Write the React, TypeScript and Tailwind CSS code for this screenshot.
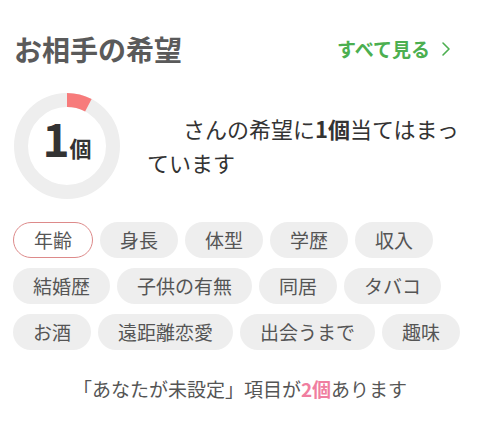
import React from 'react';

const items = [
  ['年齢', '身長', '体型', '学歴', '収入'],
  ['結婚歴', '子供の有無', '同居', 'タバコ'],
  ['お酒', '遠距離恋愛', '出会うまで', '趣味'],
];

const Ring: React.FC<{ matched: number; total: number }> = ({ matched, total }) => {
  const r = 46;
  const c = 2 * Math.PI * r;
  const len = (c * matched) / total;
  return (
    <div className="relative w-[108px] h-[108px] shrink-0">
      <svg width="108" height="108" viewBox="0 0 108 108" className="-rotate-90">
        <circle cx="54" cy="54" r={r} fill="none" stroke="#eeeeee" strokeWidth="14" />
        <circle
          cx="54"
          cy="54"
          r={r}
          fill="none"
          stroke="#f77b7b"
          strokeWidth="14"
          strokeDasharray={`${len} ${c}`}
        />
      </svg>
      <div className="absolute inset-0 flex items-baseline justify-center pt-[22px] text-[#333] font-bold">
        <span className="text-[46px] leading-none">1</span>
        <span className="text-[22px] leading-none">個</span>
      </div>
    </div>
  );
};

const App: React.FC = () => {
  return (
    <div
      className="w-[480px] h-[424px] bg-white px-[13px] pt-[30px]"
      style={{ fontFamily: '"Noto Sans CJK JP", "Noto Sans", sans-serif' }}
    >
      {/* header */}
      <div className="flex items-center justify-between pl-[1px] pr-[16px]">
        <h2 className="text-[28px] font-bold text-[#5a5a5a] leading-[38px]">お相手の希望</h2>
        <div className="flex items-center gap-[11px] text-[#4caf50] font-bold text-[19px]">
          すべて見る
          <svg width="10" height="16" viewBox="0 0 10 16" fill="none">
            <path d="M2 2 L8 8 L2 14" stroke="#4caf50" strokeWidth="1.6" strokeLinecap="round" strokeLinejoin="round" />
          </svg>
        </div>
      </div>

      {/* summary */}
      <div className="flex items-center mt-[24px]">
        <Ring matched={1} total={13} />
        <p className="ml-[26px] w-[318px] text-[22px] leading-[34px] text-[#333] -mt-[2px]">
          <span className="inline-block w-[36px]" />
          さんの希望に<span className="font-bold">1個</span>当てはまっています
        </p>
      </div>

      {/* chips */}
      <div className="flex flex-col gap-[10px] mt-[22px]">
        {items.map((row, i) => (
          <div key={i} className="flex gap-[7px]">
            {row.map((label) => (
              <span
                key={label}
                className={`h-[36px] px-[20px] rounded-full flex items-center text-[19px] text-[#555] ${
                  label === '年齢' ? 'bg-white border-[1.5px] border-[#dd8a8a]' : 'bg-[#eeeeee]'
                }`}
              >
                {label}
              </span>
            ))}
          </div>
        ))}
      </div>

      {/* footer */}
      <p className="mt-[25px] text-center text-[19px] text-[#555]">
        「あなたが未設定」項目が<span className="font-bold text-[#f07ea0]">2個</span>あります
      </p>
    </div>
  );
};

export default App;
